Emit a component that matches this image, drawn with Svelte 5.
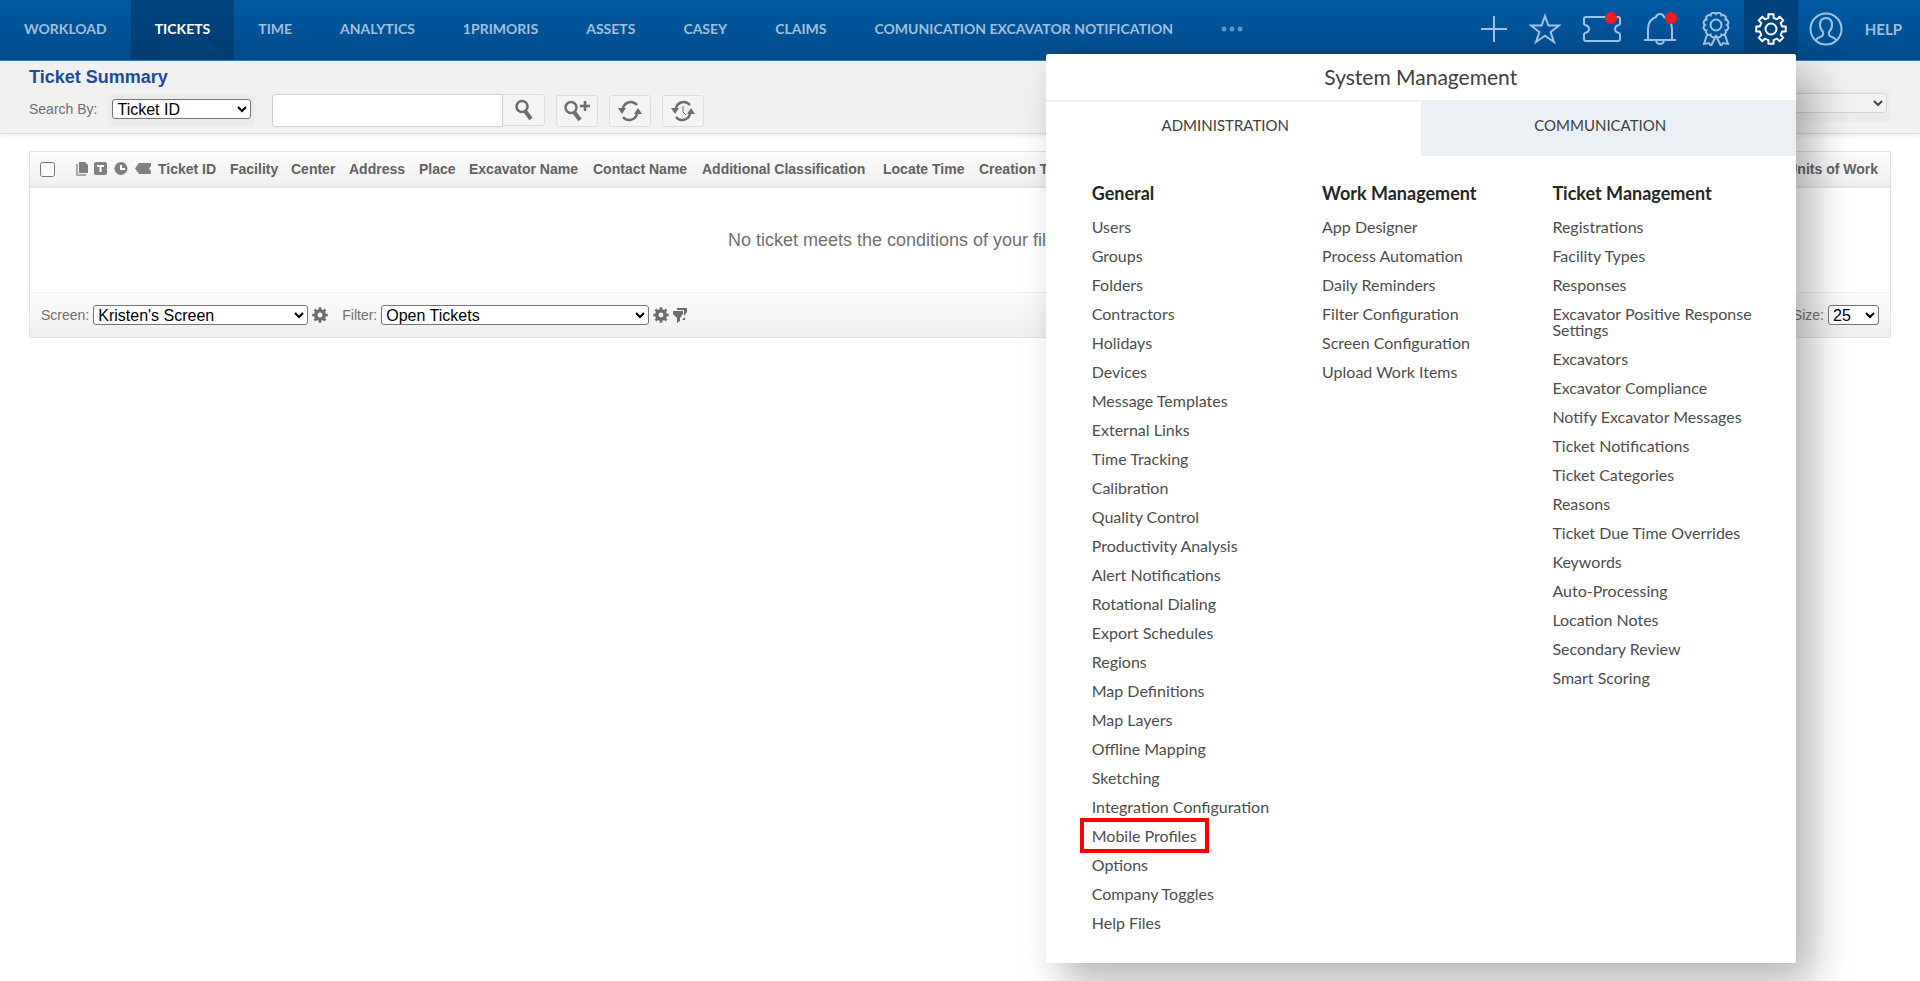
<script lang="ts">
  const navItems = [
    "WORKLOAD",
    "TICKETS",
    "TIME",
    "ANALYTICS",
    "1PRIMORIS",
    "ASSETS",
    "CASEY",
    "CLAIMS",
    "COMUNICATION EXCAVATOR NOTIFICATION",
  ];

  const columns = [
    { title: "Ticket ID", width: 72 },
    { title: "Facility", width: 61 },
    { title: "Center", width: 58 },
    { title: "Address", width: 70 },
    { title: "Place", width: 50 },
    { title: "Excavator Name", width: 124 },
    { title: "Contact Name", width: 109 },
    { title: "Additional Classification", width: 181 },
    { title: "Locate Time", width: 96 },
    { title: "Creation Time", width: 110 },
  ];

  const menu = [
    {
      title: "General",
      links: [
        "Users",
        "Groups",
        "Folders",
        "Contractors",
        "Holidays",
        "Devices",
        "Message Templates",
        "External Links",
        "Time Tracking",
        "Calibration",
        "Quality Control",
        "Productivity Analysis",
        "Alert Notifications",
        "Rotational Dialing",
        "Export Schedules",
        "Regions",
        "Map Definitions",
        "Map Layers",
        "Offline Mapping",
        "Sketching",
        "Integration Configuration",
        "Mobile Profiles",
        "Options",
        "Company Toggles",
        "Help Files",
      ],
    },
    {
      title: "Work Management",
      links: [
        "App Designer",
        "Process Automation",
        "Daily Reminders",
        "Filter Configuration",
        "Screen Configuration",
        "Upload Work Items",
      ],
    },
    {
      title: "Ticket Management",
      links: [
        "Registrations",
        "Facility Types",
        "Responses",
        "Excavator Positive Response Settings",
        "Excavators",
        "Excavator Compliance",
        "Notify Excavator Messages",
        "Ticket Notifications",
        "Ticket Categories",
        "Reasons",
        "Ticket Due Time Overrides",
        "Keywords",
        "Auto-Processing",
        "Location Notes",
        "Secondary Review",
        "Smart Scoring",
      ],
    },
  ];

  let activeNav = "TICKETS";
  let activeTab = "ADMINISTRATION";
  let highlighted = "Mobile Profiles";
  let menuOpen = true;

  // outline of a gear with eight teeth
  function gearPath(c: number, outer: number, inner: number) {
    const points: string[] = [];
    for (let i = 0; i < 8; i++) {
      const steps: [number, number][] = [
        [-13, inner],
        [-10, outer],
        [10, outer],
        [13, inner],
      ];
      for (const [offset, r] of steps) {
        const a = ((i * 45 + offset) * Math.PI) / 180;
        points.push(`${(c + r * Math.cos(a)).toFixed(2)} ${(c + r * Math.sin(a)).toFixed(2)}`);
      }
    }
    return `M${points.join("L")}Z`;
  }

  // wavy edge of the award rosette
  function rosettePath(cx: number, cy: number, r: number) {
    let d = "";
    for (let i = 0; i <= 12; i++) {
      const a = (i * 30 * Math.PI) / 180;
      const x = (cx + r * Math.cos(a)).toFixed(2);
      const y = (cy + r * Math.sin(a)).toFixed(2);
      d += i === 0 ? `M${x} ${y}` : `A3 3 0 0 1 ${x} ${y}`;
    }
    return d + "Z";
  }
</script>

<svelte:head>
  <title>Ticket Summary</title>
</svelte:head>

{#snippet smallGear()}
  <svg width="16" height="16" viewBox="0 0 15 15">
    <path
      d={gearPath(7.5, 7.4, 5.6) + "M7.5 5.2a2.3 2.3 0 1 0 0 4.6a2.3 2.3 0 1 0 0-4.6Z"}
      fill="#6e6e6e"
      fill-rule="evenodd"
    />
  </svg>
{/snippet}

{#snippet refreshArrows()}
  <path d="M5 9a8 8 0 0 1 14-3M19 15a8 8 0 0 1-14 3" fill="none" stroke="#6e6e6e" stroke-width="2.5" />
  <path d="M0 9h8l-4 6ZM16 15l4-6l4 6Z" fill="#6e6e6e" />
{/snippet}

<div class="page">
  <header class="topbar">
    <nav>
      {#each navItems as item}
        <a href="#top" class:active={item === activeNav}>{item}</a>
      {/each}
      <button class="more" aria-label="More">
        <svg width="22" height="6" viewBox="0 0 22 6">
          <circle cx="3" cy="3" r="2.5" /><circle cx="11" cy="3" r="2.5" /><circle cx="19" cy="3" r="2.5" />
        </svg>
      </button>
    </nav>
    <div class="tools">
      <button aria-label="Add">
        <svg width="26" height="34" viewBox="0 0 26 34"><path d="M13 4v26M0 17h26" /></svg>
      </button>
      <button aria-label="Favorites">
        <svg width="32" height="34" viewBox="0 0 32 34">
          <path d="M16 4l3.4 9.6h10.6l-8.4 6.4l3.4 10l-9-6.2l-9 6.2l3.4-10l-8.4-6.4h10.6Z" />
        </svg>
      </button>
      <button aria-label="Tickets">
        <svg width="38" height="34" viewBox="0 0 38 34">
          <path
            d="M3 5h32q2 0 2 2v4a2 2 0 0 1-1 2q-4 1-4 4t4 4a2 2 0 0 1 1 2v4q0 2-2 2h-32q-2 0-2-2v-4a2 2 0 0 1 1-2q4-1 4-4t-4-4a2 2 0 0 1-1-2v-4q0-2 2-2Z"
          />
          <circle class="dot" cx="28" cy="6" r="6" />
        </svg>
      </button>
      <button aria-label="Alerts">
        <svg width="34" height="34" viewBox="0 0 34 34">
          <path d="M1 28h32M5 28V17q0-9 8-12q1-3 4-3t4 3q8 3 8 12v11M13 29q1 3 4 3t4-3" />
          <circle class="dot" cx="28" cy="6" r="6" />
        </svg>
      </button>
      <button aria-label="Awards">
        <svg width="34" height="34" viewBox="0 0 34 34">
          <path d={rosettePath(17, 13, 11)} />
          <circle cx="17" cy="13" r="5.5" />
          <path d="M8 23l-3 9l5-1l2 3l4-8M26 23l3 9l-5-1l-2 3l-4-8" />
        </svg>
      </button>
      <div class="settings">
        <button aria-label="System Management" on:click={() => (menuOpen = !menuOpen)}>
          <svg width="32" height="34" viewBox="0 -1 32 34">
            <path d={gearPath(16, 15, 11.4)} stroke-linejoin="round" />
            <circle cx="16" cy="16" r="5.5" />
          </svg>
        </button>
        {#if menuOpen}
          <section class="panel">
            <h2>System Management</h2>
            <div class="tabs">
              {#each ["ADMINISTRATION", "COMMUNICATION"] as tab}
                <button class:selected={tab === activeTab} on:click={() => (activeTab = tab)}>{tab}</button>
              {/each}
            </div>
            <div class="groups">
              {#each menu as group}
                <div class="group">
                  <h3>{group.title}</h3>
                  <ul>
                    {#each group.links as link}
                      <li><a href="#menu" class:highlight={link === highlighted}>{link}</a></li>
                    {/each}
                  </ul>
                </div>
              {/each}
            </div>
          </section>
        {/if}
      </div>
      <button aria-label="Profile">
        <svg width="34" height="34" viewBox="0 0 34 34">
          <circle cx="17" cy="17" r="15.5" />
          <path
            d="M7 28q1-2 4-3q4-1 3-5q-3-3-3-7q0-7 6-7t6 7q0 4-3 7q-1 4 3 5q3 1 4 3"
          />
        </svg>
      </button>
      <a class="help" href="#help">HELP</a>
    </div>
  </header>

  <div class="searchbar">
    <div>
      <h1>Ticket Summary</h1>
      <form class="search">
        <label for="search-by">Search By:</label>
        <span class="select-box">
          <select id="search-by"><option>Ticket ID</option></select>
        </span>
        <div class="query">
          <input type="text" aria-label="Search" />
          <button type="button" aria-label="Search">
            <svg width="18" height="22" viewBox="0 0 18 22" fill="none" stroke="#6e6e6e">
              <circle cx="7" cy="7.5" r="5.5" stroke-width="2.5" />
              <path d="M10 12l6 8" stroke-width="4" />
            </svg>
          </button>
        </div>
        <button type="button" aria-label="Advanced search">
          <svg width="26" height="22" viewBox="0 0 26 22" fill="none" stroke="#6e6e6e">
            <circle cx="7" cy="7.5" r="5.5" stroke-width="2.5" />
            <path d="M10 12l6 8" stroke-width="4" />
            <path d="M16 6h10M21 1v10" stroke-width="2.5" />
          </svg>
        </button>
        <button type="button" aria-label="Refresh">
          <svg width="24" height="24" viewBox="0 0 24 24">{@render refreshArrows()}</svg>
        </button>
        <button type="button" aria-label="Timed refresh">
          <svg width="24" height="24" viewBox="0 0 24 24">
            {@render refreshArrows()}
            <path d="M12 7v6l3 3" fill="none" stroke="#6e6e6e" />
          </svg>
        </button>
      </form>
    </div>
    <span class="select-box actions">
      <select disabled aria-label="Actions"><option>Actions</option></select>
    </span>
  </div>

  <main>
    <table>
      <colgroup>
        <col style:width="45px" />
        {#each [19, 20, 21, 23] as width}
          <col style:width="{width}px" />
        {/each}
        {#each columns as column}
          <col style:width="{column.width}px" />
        {/each}
        <col />
      </colgroup>
      <thead>
        <tr>
          <th class="check"><input type="checkbox" aria-label="Select all" /></th>
          <th>
            <svg width="14" height="14" viewBox="0 0 14 14">
              <path d="M4 0h6l3 3v8h-9Z" fill="#808080" />
              <path d="M2 2v11h9" fill="none" stroke="#a8a8a8" stroke-width="2" />
            </svg>
          </th>
          <th>
            <svg width="14" height="14" viewBox="0 0 14 14">
              <rect width="13" height="13" rx="2" fill="#808080" />
              <path d="M3 4h7M6.5 4v6" stroke="#fff" stroke-width="2" />
            </svg>
          </th>
          <th>
            <svg width="14" height="14" viewBox="0 0 14 14">
              <circle cx="7" cy="6.5" r="6.5" fill="#808080" />
              <path d="M7 3v4h4" fill="none" stroke="#fff" stroke-width="2" />
            </svg>
          </th>
          <th>
            <svg width="17" height="14" viewBox="0 0 17 14">
              <path d="M0 6.5L4 1h12v3l-2 2.5l2 2.5v3H4Z" fill="#808080" />
            </svg>
          </th>
          {#each columns as column}
            <th>{column.title}</th>
          {/each}
          <th class="last">Units of Work</th>
        </tr>
      </thead>
      <tbody>
        <tr>
          <td class="empty" colspan="16">No ticket meets the conditions of your filter or your search.</td>
        </tr>
      </tbody>
    </table>
    <footer>
      <label for="screen">Screen:</label>
      <select id="screen" class="screen"><option>Kristen's Screen</option></select>
      <button aria-label="Screen settings">{@render smallGear()}</button>
      <label class="filter-label" for="filter">Filter:</label>
      <select id="filter" class="filter"><option>Open Tickets</option></select>
      <button aria-label="Filter settings">{@render smallGear()}</button>
      <button aria-label="Quick filter">
        <svg width="15" height="15" viewBox="0 0 15 15">
          <path d="M0 3h10v3l-3 4v3l-3 2v-5l-4-4ZM4 0h10v4l-3 4v-6h-7ZM9 12l3-3v3Z" fill="#6e6e6e" />
        </svg>
      </button>
      <label class="size-label" for="size">Page Size:</label>
      <select id="size" class="size"><option>25</option></select>
    </footer>
  </main>
</div>

<style>
  :global(body) {
    background: #fff;
    color: #707070;
    font-family: "Liberation Sans", Arial, sans-serif;
    font-size: 14px;
  }

  .page {
    display: flow-root;
    min-height: 100vh;
  }

  button {
    background: none;
    border: none;
    padding: 0;
    cursor: pointer;
    font: inherit;
  }

  svg {
    display: block;
  }

  a {
    color: inherit;
    text-decoration: none;
  }

  select {
    height: 20px;
    padding: 0;
    font-family: inherit;
    font-size: 16px;
    background-color: #fff;
    border: 1px solid #767676;
    border-radius: 3px;
    color: #000;
  }

  .topbar {
    display: flex;
    justify-content: space-between;
    height: 61px;
    box-sizing: border-box;
    border-bottom: 1px solid #3a78b0;
    background: linear-gradient(#005aa3, #004a8b);
    color: #a0bfdb;
    font-family: Lato, sans-serif;
    font-size: 14px;
    font-weight: 700;
    white-space: nowrap;
  }

  nav,
  .tools {
    display: flex;
  }

  nav a {
    padding: 0 24px;
    line-height: 58px;
  }

  nav a.active {
    background: linear-gradient(#004681, #003c6f);
    color: #fff;
  }

  .more {
    padding: 0 24px;
    height: 58px;
    fill: #5f93c0;
  }

  .tools {
    padding-right: 18px;
  }

  .tools > button,
  .settings > button {
    display: flex;
    align-items: center;
    height: 60px;
    padding: 0 11px 2px;
  }

  .topbar .tools > button > svg,
  .settings > button > svg {
    fill: none;
    stroke: #a0c4e0;
    stroke-width: 2;
  }

  .topbar .dot {
    fill: #ee1c25;
    stroke: none;
  }

  .settings {
    position: relative;
    background: #00437c;
  }

  .settings > button > svg {
    stroke: #fff;
  }

  .help {
    padding-left: 11px;
    font-size: 15px;
    line-height: 58px;
  }

  .panel {
    position: absolute;
    top: 54px;
    right: 2px;
    z-index: 2;
    width: 750px;
    padding-bottom: 19px;
    background: #fff;
    border-radius: 2px;
    box-shadow: 16px 18px 40px rgba(0, 0, 0, 0.3);
    color: #4d4d4d;
    font-size: 16px;
    font-weight: 400;
    white-space: normal;
  }

  h2 {
    margin: 0;
    border-bottom: 2px solid #f0f0f0;
    color: #404040;
    font-size: 21px;
    font-weight: 400;
    line-height: 46px;
    text-align: center;
  }

  .tabs {
    display: grid;
    grid-template-columns: 1fr 1fr;
  }

  .tabs button {
    height: 54px;
    padding: 0 16px 8px 0;
    background: #ebf0f5;
    color: #404040;
    font-size: 15px;
  }

  .tabs .selected {
    background: #fff;
  }

  .groups {
    display: grid;
    grid-template-columns: 1fr 1fr 1fr;
    gap: 16px;
    padding: 25px 29px 0 46px;
  }

  h3 {
    margin: 0 0 14px;
    color: #262626;
    font-size: 18px;
    font-weight: 700;
    line-height: 24px;
  }

  ul {
    margin: 0;
    padding: 0;
    list-style: none;
  }

  li {
    margin-bottom: 13px;
    line-height: 16px;
  }

  .highlight {
    position: relative;
  }

  .highlight::after {
    content: "";
    position: absolute;
    inset: -8px -12px;
    border: 4px solid #f00;
  }

  .searchbar {
    display: flex;
    justify-content: space-between;
    align-items: flex-start;
    height: 72px;
    padding: 0 29px;
    background: #f0f0f0;
    border-bottom: 1px solid #dadada;
    box-shadow: 0 2px 6px rgba(0, 0, 0, 0.08);
  }

  h1 {
    margin: 0;
    padding-top: 5px;
    color: #1f4aa0;
    font-size: 18px;
    line-height: 22px;
  }

  .search {
    display: flex;
    align-items: center;
    gap: 11px;
    padding-top: 6px;
  }

  .search label {
    padding-bottom: 4px;
  }

  .select-box {
    display: flex;
    height: 24px;
    padding: 4px 4px;
    border-radius: 3px;
    background: #ebebeb;
  }

  .select-box select {
    width: 139px;
  }

  .actions {
    margin-top: 28px;
  }

  .actions select {
    width: 200px;
    border-color: #ccc;
    background: #f4f4f4;
  }

  .query {
    display: flex;
    margin-left: 6px;
  }

  .query input {
    width: 231px;
    height: 33px;
    box-sizing: border-box;
    border: 1px solid #d0d0d0;
    border-radius: 3px 0 0 3px;
  }

  .search button {
    display: flex;
    align-items: center;
    justify-content: center;
    width: 42px;
    height: 32px;
    background: #f3f3f3;
    border: 1px solid #dcdcdc;
    border-radius: 3px;
  }

  .query button {
    border-left: none;
    border-radius: 0 3px 3px 0;
  }

  main {
    margin: 17px 29px;
    border: 1px solid #e2e2e2;
  }

  table {
    width: 100%;
    table-layout: fixed;
    border-collapse: collapse;
  }

  thead {
    background: linear-gradient(#fcfcfc, #efefef);
  }

  th {
    height: 34px;
    padding: 0;
    border-bottom: 2px solid #e6e6e6;
    color: #626262;
    text-align: left;
    white-space: nowrap;
  }

  .check {
    padding-left: 10px;
  }

  .check input {
    display: block;
    width: 15px;
    height: 15px;
    margin: 0;
  }

  .last {
    padding-right: 12px;
    text-align: right;
  }

  .empty {
    height: 104px;
    padding: 0;
    font-size: 18px;
    text-align: center;
  }

  footer {
    display: flex;
    align-items: center;
    gap: 4px;
    height: 44px;
    padding: 0 11px;
    border-top: 1px solid #efefef;
    background: linear-gradient(#fcfcfc, #efefef);
  }

  .screen {
    width: 215px;
  }

  .filter-label {
    margin-left: 10px;
  }

  .filter {
    width: 268px;
  }

  .size-label {
    margin-left: auto;
  }

  .size {
    width: 51px;
  }
</style>
